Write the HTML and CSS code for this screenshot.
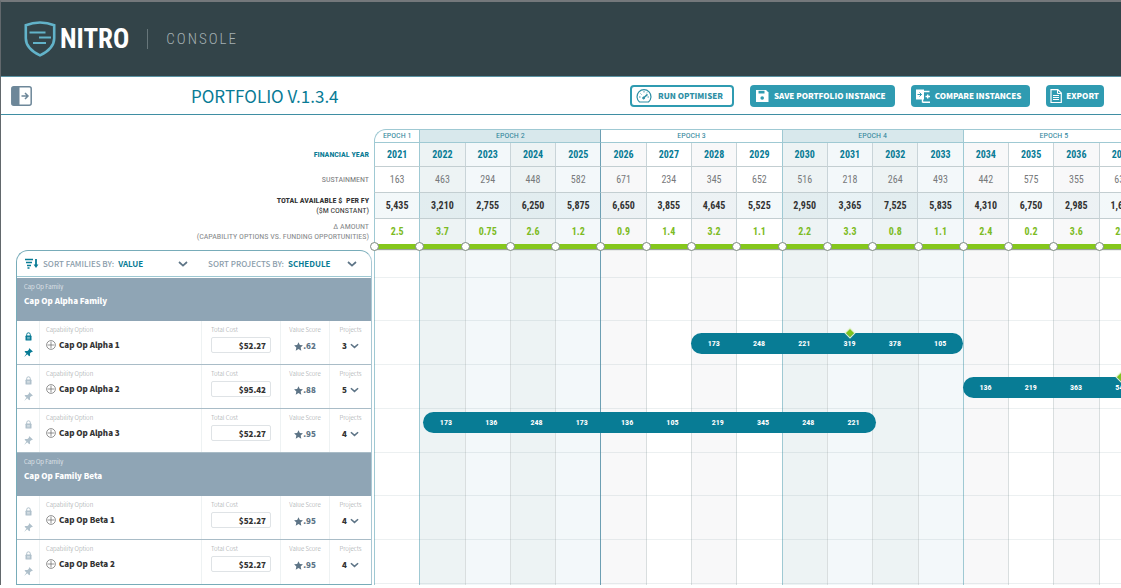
FILE: index.html
```
<!DOCTYPE html>
<html lang="en">
<head>
<meta charset="utf-8">
<title>Nitro Console</title>
<link rel="stylesheet" href="styles.css">
</head>
<body>
<svg class="sprite" aria-hidden="true">
  <symbol id="lock" viewBox="0 0 8 9"><path d="M2.2 4V2.6a1.8 1.8 0 0 1 3.6 0V4" fill="none" stroke="currentColor" stroke-width="1"/><rect x="1" y="3.6" width="6" height="5" rx=".7" fill="currentColor"/><path d="M2.6 5.4h2.800M2.600 6.800h2.800" stroke="#fff" stroke-width=".5"/></symbol>
  <symbol id="pin" viewBox="0 0 10 10"><path d="M6 .2 9.800 4l-1 .6-.7-.1-1.500 1.600.2 2.200-1 .8-2.200-2.200L.2 9.900 2.700 6.100.6 4.200l.8-1 2.400.2L5.500 2l-.2-.9z" fill="currentColor"/></symbol>
  <symbol id="plus" viewBox="0 0 10 10"><circle cx="5" cy="5" r="4.400" fill="none" stroke="currentColor" stroke-width=".7"/><path d="M5 1.600v6.800M1.600 5h6.800" stroke="currentColor" stroke-width=".7"/></symbol>
  <symbol id="star" viewBox="0 0 10 10"><path d="m5 .2 1.500 3.100 3.400.4-2.500 2.400.7 3.500L5 7.900 1.900 9.600l.7-3.500L.1 3.700l3.400-.4z" fill="currentColor"/></symbol>
  <symbol id="chev" viewBox="0 0 10 6"><path d="m1 1 4 3.600L9 1" fill="none" stroke="currentColor" stroke-width="1.700"/></symbol>
</svg>

<header class="top">
  <svg class="shield" viewBox="0 0 32 36" fill="none" stroke="#62b3c9"><path d="M16 1.500C11.500 1.500 6 2.500 1.800 4.200v13C1.800 25 8 30.500 16 34.300 24 30.500 30.200 25 30.200 17.200v-13C26 2.500 20.500 1.500 16 1.500z" stroke-width="2.600"/><path d="M5.500 11.500h16M15 16.500h12M9 22h13" stroke-width="2.200"/></svg>
  <span class="brand">NITRO</span>
  <span class="console">CONSOLE</span>
</header>

<div class="bar">
  <button class="toggle" aria-label="Expand side panel"><svg viewBox="0 0 21 20"><rect x=".8" y=".8" width="19.400" height="18.400" rx="2" fill="#fff" stroke="#6d8799" stroke-width="1.500"/><path d="M1 1h7.500v18H1z" fill="#6d8799"/><path d="M10.500 10h6M14 7l3 3-3 3" fill="none" stroke="#6d8799" stroke-width="1.500"/></svg></button>
  <h1>PORTFOLIO V.1.3.4</h1>
  <div class="actions">
    <button class="act outline"><svg viewBox="0 0 16 16" fill="none" stroke="currentColor"><path d="M3.500 14h9a7 7 0 1 0-9 0z" stroke-width="1.200"/><path d="m7.500 10 4-3.600" stroke-width="1.500"/><path d="M8 3v1.500M3 9h1.500M11.500 9H13M4.500 5.500l1 1M11 4.500l-.6.8" stroke-width=".9"/><circle cx="7.600" cy="10" r="1" fill="currentColor"/></svg>RUN OPTIMISER</button>
    <button class="act save"><svg viewBox="0 0 16 16"><path d="M2 2h10l2.500 2.500V14H2z" fill="currentColor"/><path d="M4.500 2.800h6v2.700h-6z" fill="#2f9bb1"/><circle cx="8.200" cy="10" r="1.800" fill="#2f9bb1"/></svg>SAVE PORTFOLIO INSTANCE</button>
    <button class="act compare"><svg viewBox="0 0 16 16"><path d="M1 1.500h8v10H1z" fill="currentColor"/><path d="M2.500 6.500h4M4.500 4.500l2 2-2 2" stroke="#2f9bb1" fill="none"/><path d="M9 3.500h5.500M10.500 8.500h4.500M12.700 6.500v4M7.500 14.300H15M7.500 11v3.500" stroke="currentColor" stroke-width="1.400" fill="none"/></svg>COMPARE INSTANCES</button>
    <button class="act export"><svg viewBox="0 0 16 16" fill="none" stroke="currentColor"><path d="M3 1.700h6.800L13.300 5v9.500H3z" stroke-width="1.200"/><path d="M9.500 2v3.500H13M5 7.500h6M5 9.500h6M5 11.500h6" stroke-width="1"/></svg>EXPORT</button>
  </div>
</div>

<main>
  <table class="funds">
    <thead>
      <tr class="epochs"><td></td><th scope="colgroup" class="first">EPOCH 1</th><th scope="colgroup" colspan="4" class="tint">EPOCH 2</th><th scope="colgroup" colspan="4" class="ep">EPOCH 3</th><th scope="colgroup" colspan="4" class="tint">EPOCH 4</th><th scope="colgroup" colspan="4">EPOCH 5</th></tr>
      <tr class="years"><th scope="row">FINANCIAL YEAR</th><th>2021</th><th>2022</th><th>2023</th><th>2024</th><th>2025</th><th>2026</th><th>2027</th><th>2028</th><th>2029</th><th>2030</th><th>2031</th><th>2032</th><th>2033</th><th>2034</th><th>2035</th><th>2036</th><th>2037</th></tr>
    </thead>
    <tbody>
      <tr class="sustain"><th scope="row">SUSTAINMENT</th><td>163</td><td>463</td><td>294</td><td>448</td><td>582</td><td>671</td><td>234</td><td>345</td><td>652</td><td>516</td><td>218</td><td>264</td><td>493</td><td>442</td><td>575</td><td>355</td><td>634</td></tr>
      <tr class="total"><th scope="row">TOTAL AVAILABLE $ &nbsp;PER FY<small>($M CONSTANT)</small></th><td>5,435</td><td>3,210</td><td>2,755</td><td>6,250</td><td>5,875</td><td>6,650</td><td>3,855</td><td>4,645</td><td>5,525</td><td>2,950</td><td>3,365</td><td>7,525</td><td>5,835</td><td>4,310</td><td>6,750</td><td>2,985</td><td>1,645</td></tr>
      <tr class="delta"><th scope="row">Δ AMOUNT<small>(CAPABILITY OPTIONS VS. FUNDING OPPORTUNITIES)</small></th><td>2.5</td><td>3.7</td><td>0.75</td><td>2.6</td><td>1.2</td><td>0.9</td><td>1.4</td><td>3.2</td><td>1.1</td><td>2.2</td><td>3.3</td><td>0.8</td><td>1.1</td><td>2.4</td><td>0.2</td><td>3.6</td><td>2.1</td></tr>
    </tbody>
  </table>
  <div class="track years-grid"><i></i><i></i><i></i><i></i><i></i><i></i><i></i><i></i><i></i><i></i><i></i><i></i><i></i><i></i><i></i><i></i><i></i></div>

  <div class="board">
    <section class="panel">
      <div class="sorts">
        <svg class="sorticon" viewBox="0 0 14 11"><path d="M0 1.500h8M1 4.500h6M2 7.500h4M2.500 10h2" stroke="#087b95" stroke-width="1.500"/><path d="M11 1v7" stroke="#087b95" stroke-width="1.800"/><path d="M8.600 6.500h4.800L11 10z" fill="#087b95"/></svg>
        <label for="sf">SORT FAMILIES BY:</label>
        <span class="pick grow"><select id="sf"><option>VALUE</option></select><svg><use href="#chev"/></svg></span>
        <label for="sp">SORT PROJECTS BY:</label>
        <span class="pick"><select id="sp"><option>SCHEDULE</option></select><svg><use href="#chev"/></svg></span>
      </div>
      <div class="family"><small>Cap Op Family</small><h2>Cap Op Alpha Family</h2></div>
      <div class="option active">
        <div class="marks"><button aria-label="Lock"><svg><use href="#lock"/></svg></button><button aria-label="Pin"><svg><use href="#pin"/></svg></button></div>
        <div class="name"><small>Capability Option</small><p><svg><use href="#plus"/></svg>Cap Op Alpha 1</p></div>
        <div class="cost"><label for="c1">Total Cost</label><input id="c1" value="$52.27"></div>
        <div class="score"><small>Value Score</small><p><svg><use href="#star"/></svg>.62</p></div>
        <div class="projects"><small>Projects</small><button>3<svg><use href="#chev"/></svg></button></div>
      </div>
      <div class="option">
        <div class="marks"><button aria-label="Lock"><svg><use href="#lock"/></svg></button><button aria-label="Pin"><svg><use href="#pin"/></svg></button></div>
        <div class="name"><small>Capability Option</small><p><svg><use href="#plus"/></svg>Cap Op Alpha 2</p></div>
        <div class="cost"><label for="c2">Total Cost</label><input id="c2" value="$95.42"></div>
        <div class="score"><small>Value Score</small><p><svg><use href="#star"/></svg>.88</p></div>
        <div class="projects"><small>Projects</small><button>5<svg><use href="#chev"/></svg></button></div>
      </div>
      <div class="option">
        <div class="marks"><button aria-label="Lock"><svg><use href="#lock"/></svg></button><button aria-label="Pin"><svg><use href="#pin"/></svg></button></div>
        <div class="name"><small>Capability Option</small><p><svg><use href="#plus"/></svg>Cap Op Alpha 3</p></div>
        <div class="cost"><label for="c3">Total Cost</label><input id="c3" value="$52.27"></div>
        <div class="score"><small>Value Score</small><p><svg><use href="#star"/></svg>.95</p></div>
        <div class="projects"><small>Projects</small><button>4<svg><use href="#chev"/></svg></button></div>
      </div>
      <div class="family"><small>Cap Op Family</small><h2>Cap Op Family Beta</h2></div>
      <div class="option">
        <div class="marks"><button aria-label="Lock"><svg><use href="#lock"/></svg></button><button aria-label="Pin"><svg><use href="#pin"/></svg></button></div>
        <div class="name"><small>Capability Option</small><p><svg><use href="#plus"/></svg>Cap Op Beta 1</p></div>
        <div class="cost"><label for="c4">Total Cost</label><input id="c4" value="$52.27"></div>
        <div class="score"><small>Value Score</small><p><svg><use href="#star"/></svg>.95</p></div>
        <div class="projects"><small>Projects</small><button>4<svg><use href="#chev"/></svg></button></div>
      </div>
      <div class="option">
        <div class="marks"><button aria-label="Lock"><svg><use href="#lock"/></svg></button><button aria-label="Pin"><svg><use href="#pin"/></svg></button></div>
        <div class="name"><small>Capability Option</small><p><svg><use href="#plus"/></svg>Cap Op Beta 2</p></div>
        <div class="cost"><label for="c5">Total Cost</label><input id="c5" value="$52.27"></div>
        <div class="score"><small>Value Score</small><p><svg><use href="#star"/></svg>.95</p></div>
        <div class="projects"><small>Projects</small><button>4<svg><use href="#chev"/></svg></button></div>
      </div>
    </section>
    <section class="chart">
      <div class="cols years-grid"><b></b><b></b><b></b><b></b><b></b><b></b><b></b><b></b><b></b><b></b><b></b><b></b><b></b><b></b><b></b><b></b><b></b></div>
      <div class="lanes">
        <div class="lane head"></div>
        <div class="lane short"></div>
        <div class="lane years-grid"><div class="run from-2028"><span>173</span><span>248</span><span>221</span><span class="flag">319</span><span>378</span><span>105</span></div></div>
        <div class="lane years-grid"><div class="run from-2034"><span>136</span><span>219</span><span>363</span><span class="flag">540</span></div></div>
        <div class="lane years-grid"><div class="run from-2022"><span>173</span><span>136</span><span>248</span><span>173</span><span>136</span><span>105</span><span>219</span><span>345</span><span>248</span><span>221</span></div></div>
        <div class="lane short"></div>
        <div class="lane"></div>
        <div class="lane"></div>
      </div>
    </section>
  </div>
</main>
</body>
</html>
```
FILE: styles.css
```
:root {
  --teal: #087b95;
  --action: #2f9bb1;
  --line: #9fc9d3;
  --slate: #8fa5b5;
  --side: 373px;
  --over: 23px;
  --narrow: "Roboto Condensed", "Liberation Sans Narrow", Roboto, sans-serif;
  --sans: "Noto Sans CJK SC", "Noto Sans", sans-serif;
}
* { box-sizing: border-box; }
body {
  margin: 0;
  border-top: 2px solid #74787b;
  border-left: 1px solid #62686c;
  background: #fff;
  color: #333;
  font-family: var(--sans);
  overflow: hidden;
}
h1, h2, p { margin: 0; }
button, input, select { font: inherit; color: inherit; margin: 0; padding: 0; border: 0; background: none; }
svg { display: block; flex: none; }
.sprite { display: none; }

.top {
  display: flex;
  align-items: center;
  height: 75px;
  padding-left: 23px;
  background: #334449;
  border-bottom: 1px solid #5b93a3;
}
.shield { width: 32px; height: 36px; }
.brand { margin-left: 4px; color: #fff; font: bold 27px/32px var(--narrow); }
.console {
  margin-left: 18px;
  padding-left: 18px;
  border-left: 1px solid #67767a;
  color: #a5b0b3;
  font: 300 15px/20px var(--narrow);
  letter-spacing: 2px;
}

.bar {
  display: flex;
  align-items: center;
  height: 38px;
  padding: 0 17px 0 10px;
  border-bottom: 1px solid #3f8ea3;
}
.toggle svg { width: 21px; height: 20px; }
.bar h1 { margin-left: 159px; color: var(--teal); font: 400 17px/24px var(--sans); }
.actions { display: flex; gap: 16px; margin-left: auto; }
.act {
  display: flex;
  align-items: center;
  gap: 4px;
  height: 22px;
  padding: 0 9px 0 4px;
  border-radius: 4px;
  background: var(--action);
  color: #fff;
  font: 900 8px/12px var(--sans);
}
.act svg { width: 16px; height: 16px; }
.act.outline { gap: 6px; background: #fff; border: 2px solid var(--action); color: #2f8fa5; }
.act.export { gap: 2px; padding: 0 5px 0 2px; }

main { padding-top: 14px; overflow: hidden; }
.funds {
  width: calc(100% + var(--over));
  table-layout: fixed;
  border-collapse: separate;
  border-spacing: 0;
  font: 10px/12px var(--narrow);
}
.funds th, .funds td { padding: 0; text-align: center; }
.funds tr > :first-child { width: var(--side); }
.epochs th {
  height: 14px;
  border: solid var(--line);
  border-width: 1px 0 1px 1px;
  color: #2c8399;
  font-weight: 400;
  font-size: 8px;
  line-height: 10px;
}
.epochs .first { border-top-left-radius: 12px; }
.epochs .tint { background: #d8e8ec; }
.years > *, .sustain > *, .total > *, .delta > * { border-left: 1px solid #c9d4d8; border-bottom: 1px solid #c3ced1; }
.funds tr:not(.epochs) > :first-child { border: 0; padding-right: 5px; text-align: right; font-size: 8px; line-height: 10px; }
.funds small { display: block; font-size: 8px; font-weight: 400; }
.years > * { height: 24px; color: var(--teal); font-weight: 700; }
.sustain > * { height: 26px; color: #77797b; font-weight: 400; }
.sustain > th { font-weight: 400; }
.total > * { height: 26px; color: #333; font-weight: 700; }
.delta > * { height: 25px; color: #7cbb23; font-weight: 700; border-bottom: 0; }
.delta > th { color: #85888a; font-weight: 400; }
.total td { background-image: linear-gradient(rgba(20, 120, 150, .05), rgba(20, 120, 150, .05)); }

/* Column shading: epochs 2 and 4 are blue, 3 and 5 grey, each alternating */
.funds tr:not(.epochs) > :nth-child(4n+3), .cols b:nth-child(4n+2) { background-color: #edf3f4; }
.funds tr:not(.epochs) > :nth-child(4n+5), .cols b:nth-child(4n+4) { background-color: #edf3f4; }
.funds tr:not(.epochs) > :nth-child(4n+4), .cols b:nth-child(4n+3) { background-color: #f3f8fa; }
.funds tr:not(.epochs) > :nth-child(4n+6), .cols b:nth-child(4n+5) { background-color: #f3f8fa; }
.funds tr:not(.epochs) > :nth-child(8n+7), .cols b:nth-child(8n+6),
.funds tr:not(.epochs) > :nth-child(8n+9), .cols b:nth-child(8n+8) { background-color: #f8f8f9; }
.funds tr:not(.epochs) > :nth-child(8n+8), .cols b:nth-child(8n+7),
.funds tr:not(.epochs) > :nth-child(8n+10), .cols b:nth-child(8n+9),
.funds tr:not(.epochs) > :nth-child(2), .cols b:nth-child(1) { background-color: #fff; }

.years-grid { display: grid; grid-template-columns: repeat(17, 1fr); width: calc(100% + var(--over)); }
.track { width: auto; margin: 0 calc(0px - var(--over)) 0 var(--side); height: 5px; background: #85c71c; box-shadow: 0 1px 1px #9aa49a; position: relative; z-index: 1; }
.track i { width: 9px; height: 9px; margin: -2px 0 0 -4px; border: 1px solid #7d8a80; border-radius: 50%; background: #fff; }

.board { display: grid; grid-template-columns: var(--side) 1fr; }
.panel { margin: 1px 2px 0 15px; border: 1px solid #78acb9; border-right-color: #a9c8d4; border-radius: 12px 12px 0 0; }
.sorts {
  display: flex;
  align-items: center;
  height: 26px;
  margin-bottom: 1px;
  padding: 0 14px 0 8px;
  border-bottom: 1px solid var(--line);
  color: #8b9dab;
  font: 500 8px/12px var(--sans);
}
.sorticon { width: 14px; height: 11px; margin-right: 4px; }
.pick { display: flex; align-items: center; margin-left: 4px; }
.pick select { width: 59px; appearance: none; color: var(--teal); font-weight: 700; }
.pick svg { width: 10px; height: 6px; color: #5d7486; }
.pick.grow { flex: 1; }
.pick.grow select { flex: 1; width: auto; }
.pick.grow svg { margin-right: 20px; }
small, .cost label { display: block; font-size: 6px; line-height: 8px; color: #94999c; font-weight: 300; }
.funds small { color: inherit; line-height: 10px; }
.family { height: 43px; padding: 5px 7px; background: var(--slate); color: #fff; }
.family small { color: #fff; }
.family h2 { margin-top: 4px; font: 900 8px/12px var(--sans); }
.option {
  display: grid;
  grid-template-columns: 22px 1fr 79px 49px 42px;
  height: 44px;
  border-bottom: 1px solid #a9bcc7;
  font: 900 8px/12px var(--sans);
}
.option:last-child { border-bottom: 0; }
.option > div { padding-top: 5px; border-left: 1px solid #eef2f3; }
.option > .marks { display: flex; flex-direction: column; align-items: center; gap: 7px; padding-top: 11px; color: #afc0cb; border: 0; }
.marks svg { width: 9px; height: 9px; }
.active .marks { color: var(--teal); }
.name p, .score p, .projects button { display: flex; align-items: center; }
.option > .name { padding-left: 6px; }
.name p { gap: 3px; margin-top: 5px; }
.name svg { width: 10px; height: 10px; color: #666; }
.option > .cost { padding-left: 9px; }
.cost input { display: block; width: 60px; height: 16px; margin-top: 3px; padding-right: 4px; border: 1px solid #dfe3e6; border-radius: 2px; text-align: right; }
.score p { margin-top: 6px; justify-content: center; color: #5d7486; }
.score svg { width: 9px; height: 9px; }
.score small, .projects small { text-align: center; }
.projects button { gap: 3px; margin: 6px auto 0; }
.projects svg { width: 9px; height: 6px; color: #5d7486; }

.chart { display: grid; grid-template-columns: 100%; }
.cols, .lanes { grid-area: 1 / 1; }
.cols b { border-left: 1px solid #d9dedf; }
.cols b:first-child,
.funds tr:not(.epochs) > :nth-child(2),
.funds tr:not(.epochs) > :nth-child(3), .cols b:nth-child(2),
.funds tr:not(.epochs) > :nth-child(11), .cols b:nth-child(10),
.funds tr:not(.epochs) > :nth-child(15), .cols b:nth-child(14) { border-left-color: var(--line); }
.funds tr:not(.epochs) > :nth-child(7), .cols b:nth-child(6), .epochs .ep { border-left-color: #6d9fb3; }
.lane { height: 44px; border-bottom: 1px solid rgba(100, 130, 140, .12); }
.lane.head { height: 29px; }
.lane.short { height: 43px; }
.run {
  display: flex;
  align-items: center;
  height: 21px;
  margin-top: 12px;
  border-radius: 11px;
  background: #087c95;
  color: #fff;
  font: 700 8px/10px var(--narrow);
}
.run span { flex: 1; text-align: center; }
.from-2028 { grid-column: 8 / 14; }
.from-2034 { grid-column: 14 / 18; }
.from-2022 { grid-column: 2 / 12; margin: 3px -4px 0 4px; }
.flag { position: relative; }
.flag::before {
  content: "";
  position: absolute;
  left: calc(50% - 3px);
  top: -9px;
  width: 6px;
  height: 6px;
  background: #7fc31f;
  outline: 1px solid #e4f2d0;
  transform: rotate(45deg);
}
```
